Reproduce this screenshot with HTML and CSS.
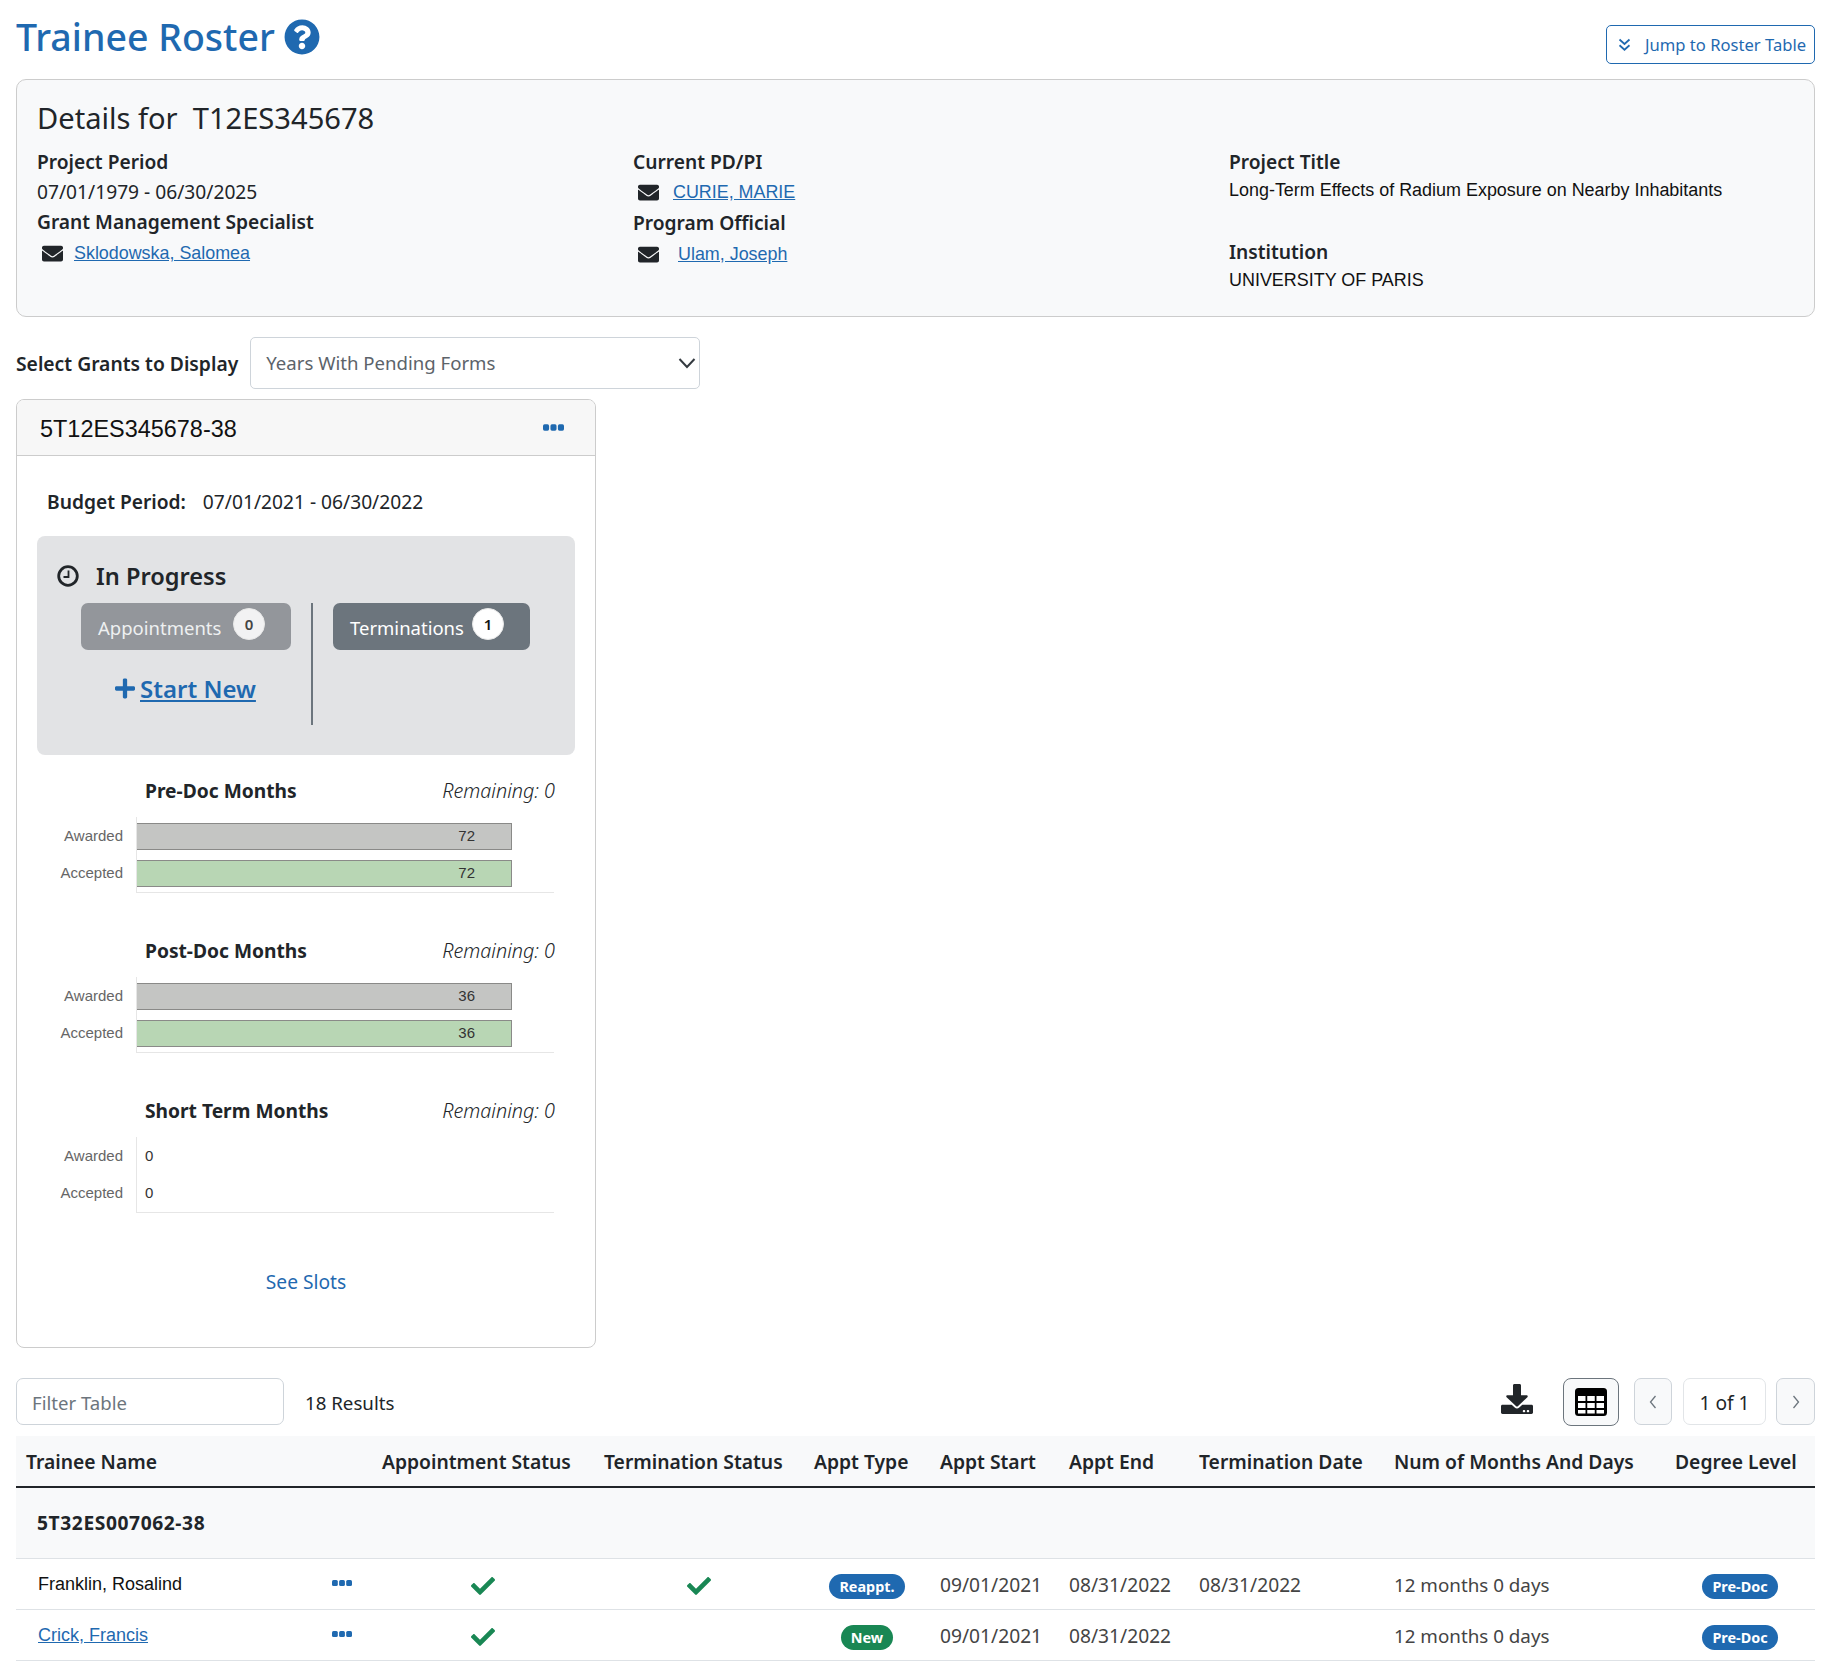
FILE: index.html
```html
<!DOCTYPE html>
<html lang="en">
<head>
<meta charset="utf-8">
<title>Trainee Roster</title>
<link rel="stylesheet" href="styles.css">
</head>
<body>
<svg class="defs" xmlns="http://www.w3.org/2000/svg">
  <symbol id="i-env" viewBox="0 0 512 512"><path d="M502.3 190.8c3.9-3.1 9.7-.2 9.7 4.7V400c0 26.5-21.5 48-48 48H48c-26.5 0-48-21.5-48-48V195.6c0-5 5.7-7.8 9.7-4.7 22.4 17.4 52.1 39.5 154.1 113.6 21.1 15.4 56.7 47.8 92.2 47.6 35.7.3 72-32.8 92.3-47.6 102-74.1 131.6-96.3 154-113.7zM256 320c23.2.4 56.6-29.2 73.4-41.4 132.7-96.3 142.8-104.7 173.4-128.7 5.8-4.5 9.2-11.5 9.2-18.9v-19c0-26.5-21.5-48-48-48H48C21.5 64 0 85.5 0 112v19c0 7.4 3.4 14.3 9.2 18.9 30.6 23.9 40.7 32.4 173.4 128.7 16.8 12.2 50.2 41.8 73.4 41.4z"/></symbol>
  <symbol id="i-dots" viewBox="0 0 20 20"><rect x="0" y="7" width="5.800" height="6" rx="1.500"/><rect x="7.100" y="7" width="5.800" height="6" rx="1.500"/><rect x="14.200" y="7" width="5.800" height="6" rx="1.500"/></symbol>
  <symbol id="i-check" viewBox="0 0 512 512"><path d="M173.898 439.404l-166.4-166.4c-9.997-9.997-9.997-26.206 0-36.204l36.203-36.204c9.997-9.998 26.207-9.998 36.204 0L192 312.69 432.095 72.596c9.997-9.997 26.207-9.997 36.204 0l36.203 36.204c9.997 9.997 9.997 26.206 0 36.204l-294.4 294.401c-9.998 9.997-26.207 9.997-36.204-.001z"/></symbol>
</svg>

<header class="page-head">
  <h1 class="page-title">Trainee Roster
    <svg class="help-icon" viewBox="0 0 512 512"><path d="M504 256c0 136.997-111.043 248-248 248S8 392.997 8 256C8 119.083 119.043 8 256 8s248 111.083 248 248zM262.655 90c-54.497 0-89.255 22.957-116.549 63.758-3.536 5.286-2.353 12.415 2.715 16.258l34.699 26.31c5.205 3.947 12.621 3.008 16.665-2.122 17.864-22.658 30.113-35.797 57.303-35.797 20.429 0 45.698 13.148 45.698 32.958 0 14.976-12.363 22.667-32.534 33.976C247.128 238.528 216 254.941 216 296v4c0 6.627 5.373 12 12 12h56c6.627 0 12-5.373 12-12v-1.333c0-28.462 83.186-29.647 83.186-106.667 0-58.002-60.165-102-116.531-102zM256 338c-25.365 0-46 20.635-46 46 0 25.364 20.635 46 46 46s46-20.636 46-46c0-25.365-20.635-46-46-46z"/></svg>
  </h1>
  <a class="jump-btn" href="#roster">
    <svg class="jump-icon" viewBox="0 0 12 12"><path d="M2 2l4 3.600L10 2M2 6.600l4 3.600 4-3.600"/></svg>
    <span>Jump to Roster Table</span>
  </a>
</header>

<section class="details">
  <h2 class="details-title">Details for&nbsp; T12ES345678</h2>
  <div class="details-grid">
    <div>
      <div class="lbl">Project Period</div>
      <div class="val">07/01/1979 - 06/30/2025</div>
      <div class="lbl">Grant Management Specialist</div>
      <div class="contact contact-a"><svg class="env"><use href="#i-env"/></svg><a href="#">Sklodowska, Salomea</a></div>
    </div>
    <div class="col-mid">
      <div class="lbl">Current PD/PI</div>
      <div class="contact contact-b"><svg class="env"><use href="#i-env"/></svg><a href="#">CURIE, MARIE</a></div>
      <div class="lbl lbl-po">Program Official</div>
      <div class="contact contact-c"><svg class="env"><use href="#i-env"/></svg><a href="#">Ulam, Joseph</a></div>
    </div>
    <div>
      <div class="lbl">Project Title</div>
      <div class="arial-val">Long-Term Effects of Radium Exposure on Nearby Inhabitants</div>
      <div class="lbl lbl-inst">Institution</div>
      <div class="arial-val">UNIVERSITY OF PARIS</div>
    </div>
  </div>
</section>

<div class="select-row">
  <label class="select-label">Select Grants to Display</label>
  <div class="select-box">
    <span>Years With Pending Forms</span>
    <svg class="select-chev" viewBox="0 0 18 12"><path d="M1.500 2l7.500 8 7.500-8"/></svg>
  </div>
</div>

<article class="card">
  <div class="card-head">
    <span class="grant-no">5T12ES345678-38</span>
    <svg class="dots-lg"><use href="#i-dots"/></svg>
  </div>
  <div class="budget"><b>Budget Period:</b><span>07/01/2021 - 06/30/2022</span></div>

  <div class="progress">
    <div class="progress-head">
      <svg class="clock" viewBox="0 0 22 22"><circle class="clock-rim" cx="11" cy="11" r="9.300"/><path d="M11.500 5.500v6.500H6.500"/></svg>
      <span>In Progress</span>
    </div>
    <div class="progress-body">
      <div class="progress-left">
        <div class="pill-btn pill-appt">Appointments <span class="count count-dim">0</span></div>
        <div class="start-new">
          <svg class="plus" viewBox="0 0 448 512"><path d="M416 208H272V64c0-17.670-14.330-32-32-32h-32c-17.670 0-32 14.330-32 32v144H32c-17.670 0-32 14.330-32 32v32c0 17.670 14.330 32 32 32h144v144c0 17.670 14.330 32 32 32h32c17.670 0 32-14.330 32-32V304h144c17.670 0 32-14.330 32-32v-32c0-17.670-14.330-32-32-32z"/></svg>
          <a href="#">Start New</a>
        </div>
      </div>
      <div class="progress-divider"></div>
      <div class="pill-btn pill-term">Terminations <span class="count">1</span></div>
    </div>
  </div>

  <div class="chart-title chart-first"><b>Pre-Doc Months</b><i>Remaining: 0</i></div>
  <div class="chart">
    <div class="chart-labels"><span>Awarded</span><span>Accepted</span></div>
    <div class="plot">
      <div class="bar bar-grey">72</div>
      <div class="bar bar-green">72</div>
    </div>
  </div>

  <div class="chart-title"><b>Post-Doc Months</b><i>Remaining: 0</i></div>
  <div class="chart">
    <div class="chart-labels"><span>Awarded</span><span>Accepted</span></div>
    <div class="plot">
      <div class="bar bar-grey">36</div>
      <div class="bar bar-green">36</div>
    </div>
  </div>

  <div class="chart-title"><b>Short Term Months</b><i>Remaining: 0</i></div>
  <div class="chart">
    <div class="chart-labels"><span>Awarded</span><span>Accepted</span></div>
    <div class="plot">
      <div class="bar bar-empty">0</div>
      <div class="bar bar-empty">0</div>
    </div>
  </div>

  <a class="see-slots" href="#">See Slots</a>
</article>

<div class="toolbar">
  <div class="filter">Filter Table</div>
  <div class="results">18 Results</div>
  <div class="tools">
    <svg class="dl-icon" viewBox="0 0 512 512" preserveAspectRatio="none"><path d="M216 0h80c13.300 0 24 10.700 24 24v168h87.700c17.800 0 26.700 21.500 14.100 34.100L269.700 378.300c-7.500 7.500-19.800 7.500-27.300 0L90.100 226.100c-12.600-12.600-3.700-34.100 14.100-34.100H192V24c0-13.300 10.700-24 24-24zm296 376v112c0 13.300-10.700 24-24 24H24c-13.300 0-24-10.700-24-24V376c0-13.300 10.700-24 24-24h146.700l49 49c20.100 20.100 52.500 20.100 72.600 0l49-49H488c13.300 0 24 10.700 24 24zm-124 88c0-11-9-20-20-20s-20 9-20 20 9 20 20 20 20-9 20-20zm64 0c0-11-9-20-20-20s-20 9-20 20 9 20 20 20 20-9 20-20z"/></svg>
    <div class="tbl-btn">
      <svg class="tbl-icon" viewBox="0 0 32 28"><rect class="tbl-frame" width="32" height="28" rx="3.500"/><path class="tbl-cells" d="M3 8h7.500v5H3zM12.250 8h7.500v5h-7.500zM21.500 8H29v5h-7.500zM3 15h7.500v5H3zM12.250 15h7.500v5h-7.500zM21.500 15H29v5h-7.500zM3 22h7.500v3.500H3zM12.250 22h7.500v3.500h-7.500zM21.500 22H29v3.500h-7.500z"/></svg>
    </div>
    <div class="pg-btn pg-prev"><svg class="pg-chev" viewBox="0 0 10 16"><path d="M7.500 2L2.500 8l5 6"/></svg></div>
    <div class="pg-count">1 of 1</div>
    <div class="pg-btn"><svg class="pg-chev" viewBox="0 0 10 16"><path d="M2.500 2l5 6-5 6"/></svg></div>
  </div>
</div>

<table class="roster" id="roster">
  <colgroup>
    <col class="c-name"><col class="c-act"><col class="c-appt"><col class="c-term"><col class="c-type"><col class="c-start"><col class="c-end"><col class="c-tdate"><col class="c-num"><col class="c-deg">
  </colgroup>
  <thead>
    <tr>
      <th colspan="2">Trainee Name</th><th>Appointment Status</th><th>Termination Status</th><th>Appt Type</th><th>Appt Start</th><th>Appt End</th><th>Termination Date</th><th>Num of Months And Days</th><th>Degree Level</th>
    </tr>
  </thead>
  <tbody>
    <tr class="group"><td colspan="10">5T32ES007062-38</td></tr>
    <tr>
      <td class="name">Franklin, Rosalind</td>
      <td class="act"><svg class="dots-sm"><use href="#i-dots"/></svg></td>
      <td class="ctr"><svg class="check"><use href="#i-check"/></svg></td>
      <td class="ctr"><svg class="check"><use href="#i-check"/></svg></td>
      <td class="ctr"><span class="pill pill-blue">Reappt.</span></td>
      <td>09/01/2021</td><td>08/31/2022</td><td>08/31/2022</td><td class="dur">12 months 0 days</td>
      <td class="ctr"><span class="pill pill-blue">Pre-Doc</span></td>
    </tr>
    <tr>
      <td class="name"><a href="#">Crick, Francis</a></td>
      <td class="act"><svg class="dots-sm"><use href="#i-dots"/></svg></td>
      <td class="ctr"><svg class="check"><use href="#i-check"/></svg></td>
      <td class="ctr"></td>
      <td class="ctr"><span class="pill pill-green">New</span></td>
      <td>09/01/2021</td><td>08/31/2022</td><td></td><td class="dur">12 months 0 days</td>
      <td class="ctr"><span class="pill pill-blue">Pre-Doc</span></td>
    </tr>
  </tbody>
</table>
</body>
</html>
```

FILE: styles.css
```css
* { box-sizing: border-box; }
html, body { margin: 0; background: #fff; }
body {
  padding: 0 31px 0 16px;
  font-family: "Noto Sans", "Open Sans", sans-serif;
  font-size: 19.2px;
  color: #212529;
  line-height: 30px;
}
.defs { display: none; }
a { color: #1f69b0; }

.page-head { display: flex; justify-content: space-between; align-items: flex-start; height: 79px; }
.page-title { margin: 13px 0 0; display: flex; align-items: center; gap: 9px; font-size: 37.500px; line-height: 48px; font-weight: 500; color: #1f69b0; }
.help-icon { width: 36px; height: 36px; fill: #1f69b0; }
.jump-btn { margin-top: 25px; width: 209px; height: 39px; display: flex; align-items: center; gap: 13px; padding-left: 10px; border: 1.500px solid #1f69b0; border-radius: 5px; font-size: 16.600px; color: #1f69b0; text-decoration: none; white-space: nowrap; }
.jump-icon { width: 15px; height: 15px; fill: none; stroke: #1f69b0; stroke-width: 1.400; flex: none; }

.details { height: 238px; padding: 20px 20px 0 20px; background: #f8f9fa; border: 1.500px solid #ccc; border-radius: 10px; }
.details-title { margin: 0; font-size: 29.100px; line-height: 36px; font-weight: 400; color: #212529; }
.details-grid { display: grid; grid-template-columns: 596px 596px 1fr; margin-top: 11px; }
.lbl { font-weight: 600; height: 30px; }
.val { height: 30px; }
.contact { display: flex; align-items: center; height: 30px; font-family: "Liberation Sans", Arial, sans-serif; font-size: 17.900px; }
.env { width: 21px; height: 21px; fill: #212529; flex: none; }
.contact-a { padding-left: 5px; gap: 11px; margin-top: 1px; }
.contact-b { padding-left: 5px; gap: 14px; }
.contact-c { padding-left: 5px; gap: 19px; margin-top: 1px; }
.lbl-po { margin-top: 1px; }
.arial-val { font-family: "Liberation Sans", Arial, sans-serif; font-size: 17.950px; height: 26px; line-height: 26px; color: #111; }
.lbl-inst { margin-top: 34px; }

.select-row { display: flex; align-items: center; gap: 12px; margin-top: 20px; height: 52px; }
.select-label { font-weight: 600; font-size: 19.300px; padding-top: 1px; }
.select-box { width: 450px; height: 52px; display: flex; align-items: center; justify-content: space-between; padding: 0 3px 0 15px; border: 1.500px solid #ced4da; border-radius: 5px; color: #5c636a; font-size: 18.600px; }
.select-chev { width: 18px; height: 12px; fill: none; stroke: #343a40; stroke-width: 2; }

.card { width: 580px; height: 949px; margin-top: 10px; border: 1.500px solid #ccc; border-radius: 8px; overflow: hidden; }
.card-head { height: 56px; display: flex; align-items: center; justify-content: space-between; padding: 2px 31px 0 23px; background: #f7f7f7; border-bottom: 1.500px solid #ccc; }
.grant-no { font-family: "Liberation Sans", Arial, sans-serif; font-size: 23.450px; color: #111; }
.dots-lg { width: 21px; height: 21px; margin-top: -3px; fill: #1f69b0; }
.budget { display: flex; gap: 17px; margin: 31px 0 19px 30px; height: 30px; }
.budget b { font-weight: 600; }

.progress { width: 538px; height: 219px; margin-left: 20px; padding: 22px 0 0 20px; background: #e2e3e5; border-radius: 8px; }
.progress-head { display: flex; align-items: center; gap: 17px; height: 36px; font-size: 23.600px; line-height: 36px; font-weight: 600; }
.clock { width: 22px; height: 22px; fill: none; stroke: #212529; stroke-width: 1.800; flex: none; }
.clock-rim { stroke-width: 2.800; }
.progress-body { display: flex; align-items: flex-start; margin-top: 9px; margin-left: -20px; }
.progress-left { width: 274px; padding-left: 44px; }
.progress-divider { width: 2px; height: 122px; background: #6c757d; }
.pill-btn { height: 47px; display: flex; align-items: center; justify-content: space-between; padding: 2px 26px 0 17px; border-radius: 7px; color: #fff; font-size: 18.500px; }
.pill-appt { width: 210px; background: #93969b; color: #eef0f1; }
.pill-term { width: 197px; margin-left: 20px; background: #6c757d; }
.count { width: 32px; height: 32px; margin-top: -7px; display: flex; align-items: center; justify-content: center; border-radius: 50%; background: #fff; color: #111; font-size: 15px; font-weight: 600; border: 1.500px solid #e8e8e8; }
.count-dim { background: #f2f2f3; color: #444; }
.start-new { display: flex; align-items: center; gap: 5px; margin: 21px 0 0 34px; height: 36px; font-size: 24px; line-height: 36px; font-weight: 600; }
.plus { width: 20px; height: 23px; margin-top: -2px; fill: #1f69b0; }

.chart-title { display: flex; justify-content: space-between; height: 30px; margin: 42px 40px 0 128px; }
.chart-first { margin-top: 21px; }
.chart-title b { font-weight: 700; }
.chart-title i { font-size: 19.800px; font-weight: 300; color: #212529; }
.chart { display: flex; margin-top: 11px; height: 77px; font-family: "Liberation Sans", Arial, sans-serif; }
.chart-labels { width: 119px; padding: 5px 13px 0 0; display: flex; flex-direction: column; gap: 10px; align-items: flex-end; font-size: 15px; color: #666; }
.chart-labels span { height: 27px; line-height: 27px; }
.plot { width: 418px; height: 76px; padding-top: 6px; display: flex; flex-direction: column; gap: 10px; border-left: 1.500px solid #e6e6e6; border-bottom: 1.500px solid #e6e6e6; }
.bar { width: 375px; height: 27px; line-height: 23px; text-align: right; padding-right: 36px; font-size: 15px; color: #333; border: 1.500px solid #8a8a88; border-left: 0; }
.bar-grey { background: #c4c5c3; }
.bar-green { background: #b8d6b4; }
.bar-empty { background: none; border: 0; line-height: 25px; text-align: left; padding-left: 8px; }
.see-slots { display: block; margin-top: 53px; text-align: center; text-decoration: none; height: 30px; }

.toolbar { display: flex; align-items: flex-start; margin-top: 30px; height: 48px; }
.filter { width: 268px; height: 47px; padding-left: 15px; line-height: 47px; font-size: 18.600px; color: #6c757d; border: 1.500px solid #ced4da; border-radius: 7px; }
.results { margin-left: 21px; line-height: 50px; font-size: 18.700px; }
.tools { margin-left: auto; display: flex; align-items: flex-start; gap: 11px; }
.dl-icon { width: 32px; height: 30px; margin: 6px 19px 0 0; fill: #212529; }
.tbl-btn { width: 56px; height: 48px; margin-right: 4px; display: flex; align-items: center; justify-content: center; background: #f8f9fa; border: 1.500px solid #6c757d; border-radius: 8px; }
.tbl-icon { width: 32px; height: 28px; }
.tbl-frame { fill: #000; }
.tbl-cells { fill: #fff; }
.pg-btn { width: 39px; height: 47px; display: flex; align-items: center; justify-content: center; background: #f8f9fa; border: 1.500px solid #ced4da; border-radius: 7px; }
.pg-prev { width: 38px; }
.pg-chev { width: 10px; height: 16px; fill: none; stroke: #6c757d; stroke-width: 1.300; }
.pg-count { width: 83px; height: 47px; margin-right: -1px; line-height: 47px; text-align: center; border: 1.500px solid #e2e5e8; border-radius: 7px; }

.roster { width: 1799px; margin-top: 10px; table-layout: fixed; border-collapse: collapse; }
.c-name { width: 306px; } .c-act { width: 50px; } .c-appt { width: 222px; } .c-term { width: 210px; }
.c-type { width: 126px; } .c-start { width: 129px; } .c-end { width: 130px; } .c-tdate { width: 195px; }
.c-num { width: 281px; } .c-deg { width: 150px; }
.roster th { height: 51px; padding: 2px 0 0 10px; text-align: left; font-weight: 600; font-size: 19.300px; white-space: nowrap; background: #f8f9fa; border-bottom: 2px solid #212529; }
.roster td { height: 51px; padding: 2px 0 0 10px; color: #444; border-bottom: 1.500px solid #dee2e6; white-space: nowrap; }
.roster .group td { height: 71px; padding: 1px 0 0 21px; background: #f8f9fa; font-weight: 700; font-size: 19.200px; letter-spacing: .6px; color: #212529; }
.roster td.name { padding-left: 22px; padding-top: 0; font-family: "Liberation Sans", Arial, sans-serif; font-size: 18px; color: #111; }
.roster td.act { padding: 0 0 2px 10px; }
.roster td.ctr { padding-left: 0; text-align: center; }
.roster td.dur { font-size: 18.800px; }
.dots-sm { display: block; width: 20px; height: 20px; fill: #1f69b0; }
.check { width: 24px; height: 24px; fill: #198754; vertical-align: middle; }
.pill { display: inline-block; height: 25px; line-height: 25px; padding: 0 10px; border-radius: 13px; color: #fff; font-size: 14.400px; font-weight: 700; vertical-align: middle; }
.pill-blue { background: #1f69b0; }
.pill-green { background: #198754; }
```
